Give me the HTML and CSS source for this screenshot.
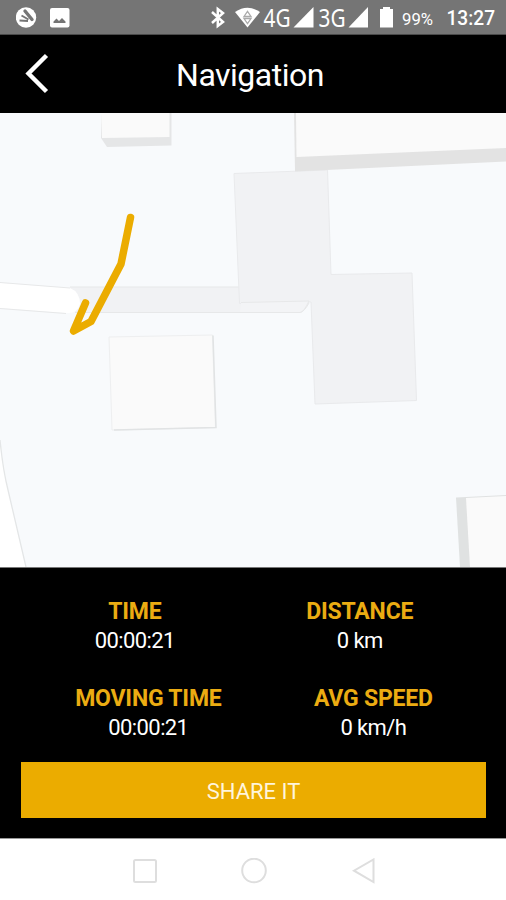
FILE: index.html
```
<!DOCTYPE html>
<html lang="en">
  <head>
    <meta charset="utf-8">
    <meta name="viewport" content="width=device-width, initial-scale=1">
    <title>Navigation</title>
    <link rel="stylesheet" href="styles.css">
  </head>

  <body>
    <div class="status-bar">
      <svg class="notifications" width="54" height="35" viewBox="0 0 54 35">
        <circle cx="10" cy="17.500" r="10.200" fill="#fff"/>
        <path d="M9 11L16 19.500" fill="none" stroke="#757575" stroke-width="3.400" stroke-linecap="round"/>
        <path d="M5.500 15.500L12.500 19.500M3.500 20.500L12 21" fill="none" stroke="#757575" stroke-width="2"/>
        <rect x="34" y="8" width="19.500" height="19.500" rx="2" fill="#fff"/>
        <path d="M37.500 23V21.500L40.500 18.500L43 21L46 18L49.500 21.500V23Z" fill="#757575"/>
      </svg>
      <div class="status-right">
        <svg width="289" height="35" viewBox="211 0 289 35">
          <path d="M212 12L223 22L217.800 26V9L223 13L212 23" fill="none" stroke="#fff" stroke-width="2.500"/>
          <path d="M235 12Q247.500 3.500 260 12L247.500 27.500Z" fill="#fff"/>
          <path d="M244 16.500L247.500 11.500L251 16.500ZM244 18.500H251L247.500 23.500Z" fill="#fff" stroke="#aaa" stroke-width="1.300"/>
          <text class="network" x="263.500" y="27" textLength="27" lengthAdjust="spacingAndGlyphs">4G</text>
          <path d="M313.500 7V27.500H293.500Z" fill="#fff"/>
          <text class="network" x="318.500" y="27" textLength="27" lengthAdjust="spacingAndGlyphs">3G</text>
          <path d="M368 7V27.500H348.500Z" fill="#fff"/>
          <path d="M383 7H390V9H393V27.500H380V9H383Z" fill="#fff"/>
          <text class="battery" x="402" y="24.500" textLength="31" lengthAdjust="spacingAndGlyphs">99%</text>
          <text class="clock" x="446.500" y="25" textLength="48.500" lengthAdjust="spacingAndGlyphs">13:27</text>
        </svg>
      </div>
    </div>

    <div class="header">
      <svg class="back" width="26" height="42" viewBox="0 0 26 42">
        <path d="M22.500 2.500L4.500 20.500L22.500 38.500" fill="none" stroke="#fff" stroke-width="4.400"/>
      </svg>
      <h1>Navigation</h1>
    </div>

    <svg class="map" width="506" height="454" viewBox="0 113 506 454">
      <rect y="113" width="506" height="454" fill="#f8fafc"/>

      <!-- roads -->
      <path d="M70 287L240 287L308 302L302 312H75Z" fill="#f1f2f4"/>
      <path d="M70 287H240M75 312.500H300Q304 312 309 303" fill="none" stroke="#e7e8e9"/>
      <path d="M0 283L70 288Q80 292 80 304Q78 314 66 313L0 308Z" fill="#fff"/>
      <path d="M0 282.500L70 288M66 313.500L0 308.500" fill="none" stroke="#e7e8e9"/>
      <path d="M0 440L8 490L26 567H0Z" fill="#fff"/>
      <path d="M0 440Q3 470 8 490L26 567" fill="none" stroke="#e4e6e7" stroke-width="1.300"/>

      <!-- areas -->
      <path d="M234 173.500L327.500 170L331 274.500L412 273L416.500 400.500L315 404L311 302L239.500 303.500Z" fill="#f1f2f4" stroke="#e9eaec"/>
      <path d="M241 302.500L309 301Q304 312 300 312.500H240" fill="#f3f4f6" stroke="#e7e8e9"/>

      <!-- buildings -->
      <path d="M101 113H171.500V145.500L107 147L101 138Z" fill="#e5e6e7"/>
      <path d="M101 113H169.500V137L102 138Z" fill="#fafafa"/>
      <path d="M294 113H506V161.500L295 171.500Z" fill="#e3e3e3"/>
      <path d="M296 113H506V148L296.500 157Z" fill="#fafafa"/>
      <path d="M109 337L212.500 335L215.500 427.500L112 430Z" fill="#fafafa" stroke="#eeeff0"/>
      <path d="M213 335.500L216 427.500L114 430" fill="none" stroke="#e1e3e4" stroke-width="1.500"/>
      <path d="M456 497.500L506 495V567H460Z" fill="#e0e2e2"/>
      <path d="M466 498L506 496V567H470Z" fill="#fafafa"/>

      <path d="M130.500 217.500L121 264L91 321.500L73.500 331L85.500 303" fill="none" stroke="#ebac00" stroke-width="7.500" stroke-linecap="round" stroke-linejoin="round"/>
    </svg>

    <div class="panel">
      <div class="row">
        <div class="stat"><b>TIME</b><span>00:00:21</span></div>
        <div class="stat"><b>DISTANCE</b><span>0 km</span></div>
      </div>
      <div class="row">
        <div class="stat"><b>MOVING TIME</b><span>00:00:21</span></div>
        <div class="stat"><b>AVG SPEED</b><span>0 km/h</span></div>
      </div>
      <button class="share">SHARE IT</button>
    </div>

    <div class="nav-bar">
      <svg width="26" height="26" viewBox="0 0 26 26"><rect x="2" y="2" width="22" height="22" rx="1.500"/></svg>
      <svg width="26" height="26" viewBox="0 0 26 26"><circle cx="13" cy="12.500" r="11.800"/></svg>
      <svg width="26" height="26" viewBox="0 0 26 26"><path d="M23.500 1.500V24L4 12.700Z"/></svg>
    </div>
  </body>
</html>
```

FILE: styles.css
```
body {
  margin: 0;
  width: 506px;
  height: 900px;
  overflow: hidden;
  font-family: Roboto, "Liberation Sans", sans-serif;
  background: #fff;
  color: #fff;
}
svg {
  display: block;
}
.status-bar {
  display: flex;
  justify-content: space-between;
  height: 35px;
  padding: 0 6px 0 16px;
  box-sizing: border-box;
  background: #757575;
  border-bottom: 1px solid #4a4a4a;
}
.status-right text {
  fill: #fff;
}
.network {
  font-family: "Noto Sans", sans-serif;
  font-size: 26px;
}
.battery {
  font-size: 17px;
}
.clock {
  font-size: 20px;
  font-weight: 500;
}
.header {
  display: grid;
  grid-template-columns: 60px 1fr 66px;
  align-items: center;
  height: 78px;
  background: #000;
}
.back {
  margin-left: 24px;
}
.header h1 {
  margin: 0;
  padding-top: 2px;
  text-align: center;
  font-size: 32px;
  font-weight: 400;
  line-height: 40px;
  letter-spacing: -0.5px;
}
.panel {
  height: 271px;
  padding: 29px 21px 0;
  box-sizing: border-box;
  background: #000;
  border-top: 1px solid #777;
}
.row {
  display: flex;
  justify-content: space-around;
  height: 87px;
  padding: 0 6px 0 8px;
}
.stat {
  display: flex;
  flex-direction: column;
  align-items: center;
  line-height: 29px;
}
.stat b {
  color: #ebac12;
  font-size: 23px;
  letter-spacing: -0.2px;
}
.stat span {
  font-size: 22px;
  letter-spacing: -0.6px;
}
.share {
  display: block;
  width: 465px;
  height: 56px;
  margin-top: -9px;
  padding: 2px 0 0;
  border: 0;
  background: #ebac00;
  color: #fff5dc;
  font-family: inherit;
  font-size: 22px;
}
.nav-bar {
  display: flex;
  justify-content: center;
  gap: 83px;
  height: 62px;
  padding: 19px 0 0 1px;
  box-sizing: border-box;
  background: #fff;
  border-top: 1px solid #999;
}
.nav-bar svg {
  fill: none;
  stroke: #dedede;
  stroke-width: 2;
}
```
